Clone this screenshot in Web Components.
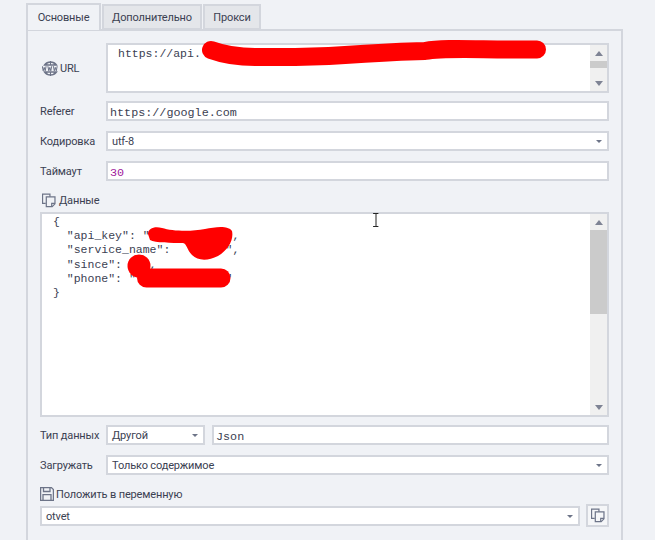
<!DOCTYPE html>
<html lang="ru"><head><meta charset="utf-8"><title>Запрос</title>
<style>html,body{margin:0;padding:0;background:#f0f2f6;overflow:hidden;height:540px}</style></head>
<body>
<x-app>
  <x-tabs slot="tabs"><x-tab active>Основные</x-tab><x-tab style="--w:100px">Дополнительно</x-tab><x-tab style="--w:58px">Прокси</x-tab></x-tabs>
  <x-row h="50" top="12"><x-label slot="label" center><x-icon name="www"></x-icon>URL</x-label>
    <x-textbox mono h="50" thumb-top="16" thumb-h="7">https://api.</x-textbox></x-row>
  <x-row h="20" top="8"><x-label slot="label">Referer</x-label><x-input mono>https://google.com</x-input></x-row>
  <x-row h="20" top="10"><x-label slot="label">Кодировка</x-label><x-select>utf-8</x-select></x-row>
  <x-row h="20" top="10"><x-label slot="label">Таймаут</x-label><x-input mono style="color:#a0209c">30</x-input></x-row>
  <x-row h="22" top="9" full><x-label style="padding:0 0 2px 2px;gap:3px"><x-icon name="copy"></x-icon>Данные</x-label></x-row>
  <x-row h="205" top="0" full><x-textbox mono code h="205" thumb-top="16" thumb-h="84">{
  "api_key": "           ",
  "service_name":        ",
  "since":    ,
  "phone": "             "
}</x-textbox></x-row>
  <x-row h="20" top="8"><x-label slot="label">Тип данных</x-label>
    <x-split><x-select style="width:99px;flex:none">Другой</x-select><x-input mono style="flex:1">Json</x-input></x-split></x-row>
  <x-row h="20" top="10"><x-label slot="label">Загружать</x-label><x-select>Только содержимое</x-select></x-row>
  <x-row h="22" top="9" full><x-label style="padding-bottom:2px;gap:2px"><x-icon name="save"></x-icon>Положить в переменную</x-label></x-row>
  <x-row h="22" top="-1" full><x-split tight><x-select style="flex:1;height:20px;margin-top:1px">otvet</x-select><x-iconbutton></x-iconbutton></x-split></x-row>
  <x-scribble slot="over"></x-scribble>
</x-app>
<script>
const UI='Roboto,"Noto Sans",sans-serif', MONO='"Liberation Mono","Courier New",monospace';
const BORDER='#d3d6dd';
class Base extends HTMLElement{
  constructor(){super();this.attachShadow({mode:'open'});}
  connectedCallback(){this.render&&this.render();}
}
class XApp extends Base{render(){this.shadowRoot.innerHTML=`<style>
 :host{display:block;position:relative;width:655px;height:540px;font:11px ${UI};letter-spacing:-.15px;color:#3b4152;padding:3px 0 0 26px;box-sizing:border-box}
 .panel{display:flex;flex-direction:column;box-sizing:border-box;width:597px;height:520px;margin-top:-1px;border:2px solid ${BORDER};border-bottom:0;padding:0 12px}
 </style><slot name="tabs"></slot><div class="panel"><slot></slot></div><slot name="over"></slot>`;}}
class XTabs extends Base{render(){this.shadowRoot.innerHTML=`<style>:host{display:flex;position:relative;z-index:1;align-items:flex-start;gap:1px}</style><slot></slot>`;}}
class XTab extends Base{render(){const a=this.hasAttribute('active');this.shadowRoot.innerHTML=`<style>
 :host{display:flex;align-items:center;justify-content:center;box-sizing:border-box;width:var(--w,75px);
 height:${a?27:26}px;margin-top:${a?0:1}px;border:2px solid ${BORDER};border-bottom:${a?'0':'2px solid '+BORDER};
 background:${a?'#f0f2f6':'#e4e6ea'};font-size:11px}</style><slot></slot>`;}}
class XRow extends Base{render(){const h=this.getAttribute('h'),t=this.getAttribute('top'),f=this.hasAttribute('full');
 this.shadowRoot.innerHTML=`<style>:host{display:flex;flex:none;height:${h}px;margin-top:${t}px;align-items:stretch}
 .l{display:${f?'none':'flex'};width:66px;flex:none}.c{flex:1;min-width:0;display:flex}
 ::slotted(*){flex:1}</style><div class="l"><slot name="label"></slot></div><div class="c"><slot></slot></div>`;}}
class XLabel extends Base{render(){this.shadowRoot.innerHTML=`<style>:host{display:flex;align-items:center;gap:1px;white-space:nowrap;font-size:11px;box-sizing:border-box;${this.hasAttribute('center')?'padding-left:2px;':''}}</style><slot></slot>`;}}
class XInput extends Base{render(){const m=this.hasAttribute('mono');this.shadowRoot.innerHTML=`<style>
 :host{display:flex;align-items:center;box-sizing:border-box;background:#fff;border:2px solid ${BORDER};padding:${m?'4px':'0'} 2px 0;white-space:pre;letter-spacing:0;
 font:${m?'11.75px '+MONO:'11px '+UI}}</style><slot></slot>`;}}
class XSelect extends Base{render(){this.shadowRoot.innerHTML=`<style>
 :host{display:flex;align-items:center;box-sizing:border-box;background:#fff;border:2px solid ${BORDER};padding:0 4px 0 4px;font:11px ${UI};white-space:nowrap}
 .t{flex:1}.a{display:flex;flex-direction:column;align-items:center;width:6px;margin-right:1px}
 .c{width:0;height:0;border:3px solid transparent;border-top:3px solid #6d7488;border-bottom:0}
 </style><span class="t"><slot></slot></span><span class="a"><i class="c"></i></span>`;}}
class XScrollbar extends Base{render(){const t=+this.getAttribute('top'),h=+this.getAttribute('thumb');
 this.shadowRoot.innerHTML=`<style>:host{display:flex;flex-direction:column;width:17px;flex:none;background:#f0f0f0}
 .btn{flex:none;height:${t}px;display:flex;align-items:center;justify-content:center}.up{width:0;border:4px solid transparent;border-top:0;border-bottom:5px solid #7e8394}
 .dn{width:0;border:4px solid transparent;border-bottom:0;border-top:5px solid #7e8394}.th{flex:none;height:${h}px;background:#cbcbcb}.sp{flex:1}
 </style><div class="btn"><i class="up"></i></div><div class="th"></div><div class="sp"></div><div class="btn"><i class="dn"></i></div>`;}}
class XTextbox extends Base{render(){const code=this.hasAttribute('code');
 this.shadowRoot.innerHTML=`<style>:host{display:flex;box-sizing:border-box;flex:1;background:#fff;border:2px solid ${BORDER};letter-spacing:0;font:11.5px/14.2px ${MONO};color:#3b4152}
 .t{flex:1;white-space:pre;padding:${code?'1px 0 0 11px':'2px 0 0 10px'};min-width:0;overflow:hidden}</style>
 <div class="t"><slot></slot></div><x-scrollbar top="${this.getAttribute('thumb-top')}" thumb="${this.getAttribute('thumb-h')}"></x-scrollbar>`;}}
class XSplit extends Base{render(){this.shadowRoot.innerHTML=`<style>:host{display:flex;gap:${this.hasAttribute('tight')?6:7}px;align-items:flex-start;flex:1;min-width:0}::slotted(*){height:20px}</style><slot></slot>`;}}
const ICONS={
 www:`<svg width="17" height="17" viewBox="0 0 17 17" fill="none" stroke="#6d7488"><path d="M2.500 5A7.500 7.500 0 0 1 14.500 5H2.500zM2.500 12A7.500 7.500 0 0 0 14.500 12H2.500z" stroke-width="1.300"/><path d="M8.500 1v4M8.500 12v4M5.700 2C5 3 4.800 4 4.700 5M11.300 2c.7 1 .9 2 1 3M5.700 15c-.7-1-.9-2-1-3M11.300 15c.7-1 .9-2 1-3" stroke-width="1"/><path d="M.3 6.200l.9 4.600 1-3.400 1 3.400.9-4.600M5.900 6.200l.9 4.600 1-3.400 1 3.400.9-4.600M11.400 6.200l.9 4.600 1-3.400 1 3.400.9-4.600" stroke-width="1"/></svg>`,
 copy:`<svg width="14" height="15" viewBox="0 0 15 15" fill="none" stroke="#6d7488" stroke-width="1.300"><path d="M8.500 3.500V.6H.6v9.900h3.400"/><path d="M4.600 3.600h9.300v7.500l-3 3H4.600z"/><path d="M13.900 10.600h-3.500v3.500"/></svg>`,
 save:`<svg width="14" height="14" viewBox="0 0 14 14" fill="none" stroke="#6d7488" stroke-width="1.300"><path d="M.6.6h10.800l2 2v10.800H.6z"/><path d="M3.500.8v3.700h6.500V.8"/><path d="M3 13.200V7.600h8v5.600"/></svg>`};
class XIcon extends Base{render(){this.shadowRoot.innerHTML=`<style>:host{display:inline-flex;flex:none}</style>${ICONS[this.getAttribute('name')]}`;}}
class XIconbutton extends Base{render(){this.shadowRoot.innerHTML=`<style>:host{display:flex;align-items:center;justify-content:center;flex:none;box-sizing:border-box;width:23px;height:23px !important;margin-top:-1px;background:#f5f6f8;border:2px solid ${BORDER}}</style>${ICONS.copy}`;}}
class XScribble extends Base{render(){this.shadowRoot.innerHTML=`<style>:host{position:absolute;left:0;top:0;width:655px;height:540px;pointer-events:none}svg{display:block}</style>
 <svg width="655" height="540" viewBox="0 0 655 540" fill="none" stroke="#f00" stroke-linecap="round" stroke-linejoin="round">
  <path stroke-width="18" d="M211 50C222 54 235 57 255 57S300 58 345 55S395 52 425 51C445 47 480 50 537 49.500"/>
  <path fill="#f00" stroke="none" d="M148 234C148 228 155 226 162 228C172 231 190 232 205 229C215 227 228 225 232 231C234 240 228 250 218 256C208 261 198 261 192 255C187 250 187 244 183 243C172 243 155 243 150 240Z"/>
  <circle cx="139" cy="266" r="11.500" fill="#f00" stroke="none"/>
  <path stroke-width="19" d="M146.500 278L221 278"/>
  <path stroke="#222" stroke-width="1" d="M373.500 213.500h2M378 213.500h-2M376 214v12M373.500 226.500h2M378 226.500h-2" />
 </svg>`;}}
for(const [n,c] of Object.entries({'x-app':XApp,'x-tabs':XTabs,'x-tab':XTab,'x-row':XRow,'x-label':XLabel,'x-input':XInput,'x-select':XSelect,'x-scrollbar':XScrollbar,'x-textbox':XTextbox,'x-split':XSplit,'x-icon':XIcon,'x-iconbutton':XIconbutton,'x-scribble':XScribble}))customElements.define(n,c);
</script>
</body></html>
